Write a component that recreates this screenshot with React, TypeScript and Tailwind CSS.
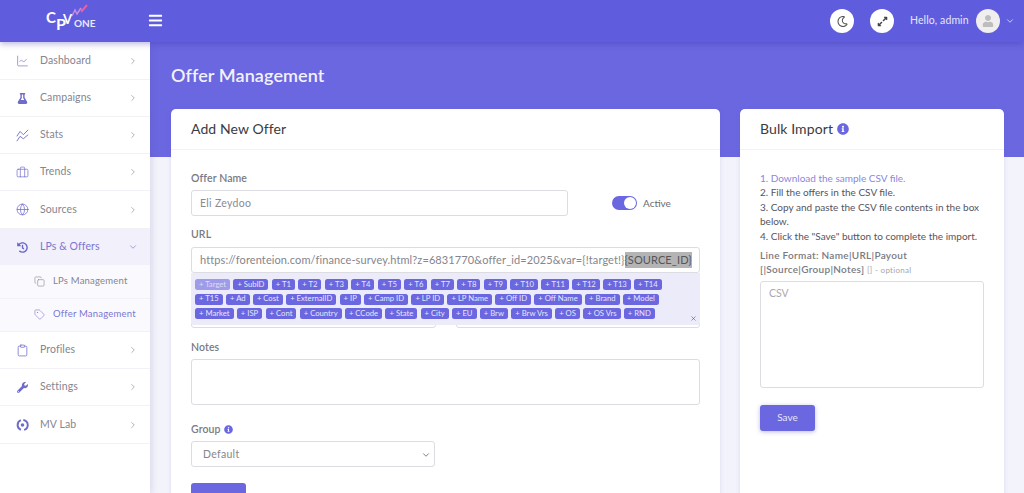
import React from 'react';
import { ChartLine, Briefcase, Globe, Copy, Tag, Clipboard, ChevronRight, ChevronDown, X } from 'lucide-react';
import { FaBars, FaFlask, FaHistory, FaWrench, FaInfoCircle, FaUser, FaRegMoon, FaExpandAlt } from 'react-icons/fa';

const StatsIcon = () => (
  <svg width="15" height="15" viewBox="0 0 16 16" fill="none" stroke="currentColor" strokeWidth="1.1">
    <path d="M1 9 L5 3 L9 7 L15 1" />
    <path d="M1 15 L5 9 L9 12 L15 7" />
  </svg>
);

const LabIcon = () => (
  <svg width="14" height="14" viewBox="0 0 16 16" fill="none" stroke="currentColor" strokeWidth="2.4">
    <path d="M6 2 A6.5 6.5 0 0 0 6 14" />
    <path d="M9 1.8 A6.5 6.5 0 0 1 14.5 8 A6.5 6.5 0 0 1 10 14" />
    <circle cx="8" cy="8" r="2.2" fill="currentColor" stroke="none" />
  </svg>
);

const items = [
  { label: 'Dashboard', icon: <ChartLine size={14} strokeWidth={1.2} />, h: 'h-[37px]' },
  { label: 'Campaigns', icon: <FaFlask size={11} />, h: 'h-[37px]' },
  { label: 'Stats', icon: <StatsIcon />, h: 'h-[37px]' },
  { label: 'Trends', icon: <Briefcase size={13} strokeWidth={1.3} />, h: 'h-[37px]' },
  { label: 'Sources', icon: <Globe size={13} strokeWidth={1.4} />, h: 'h-[38px]' },
];

const itemsAfter = [
  { label: 'Profiles', icon: <Clipboard size={13} strokeWidth={1.4} />, h: 'h-[37px]' },
  { label: 'Settings', icon: <FaWrench size={11} />, h: 'h-[37px]' },
  { label: 'MV Lab', icon: <LabIcon />, h: 'h-[38px]' },
];

const tagRows = [
  ['Target', 'SubID', 'T1', 'T2', 'T3', 'T4', 'T5', 'T6', 'T7', 'T8', 'T9', 'T10', 'T11', 'T12', 'T13', 'T14'],
  ['T15', 'Ad', 'Cost', 'ExternalID', 'IP', 'Camp ID', 'LP ID', 'LP Name', 'Off ID', 'Off Name', 'Brand', 'Model'],
  ['Market', 'ISP', 'Cont', 'Country', 'CCode', 'State', 'City', 'EU', 'Brw', 'Brw Vrs', 'OS', 'OS Vrs', 'RND'],
];

const SideItem = ({ label, icon, h }: { label: string; icon: React.ReactNode; h: string }) => (
  <div className={`${h} flex items-center border-b border-[#f1f1f6] pl-[16px] pr-[12px] text-[#85858f]`}>
    <span className="w-[13px] flex justify-center text-[#6f6bc9]">{icon}</span>
    <span className="ml-[11px] flex-1 text-[10.5px] tracking-[0.1px]">{label}</span>
    <ChevronRight size={10} strokeWidth={1.6} className="text-[#8b8b95]" />
  </div>
);

const Label = ({ children }: { children: React.ReactNode }) => (
  <div className="text-[10.5px] font-semibold text-[#7a7a82] tracking-[0.1px] leading-[14px]">{children}</div>
);

export default function App() {
  return (
    <div className="h-[493px] w-[1024px] overflow-hidden flex flex-col bg-[#f3f3fb] font-['Lato','Noto_Sans',sans-serif]">
      <header className="h-[42px] shrink-0 flex items-center bg-[#5f5cdd] shadow-[0_2px_6px_rgba(60,50,160,0.35)] z-10 text-white">
        <div className="w-[148px] flex justify-center">
          <svg width="56" height="34" viewBox="0 0 56 34">
            <path d="M26 12 L29 6 L31 10 L35 4" fill="none" stroke="#c58ae0" strokeWidth="1.6" />
            <path d="M35 5 L36 7 L41 1" fill="none" stroke="#ec5f9e" strokeWidth="2" />
            <text x="0" y="19" fontSize="15" fontWeight="700" fill="#fff" fontFamily="Lato">C</text>
            <text x="10" y="26" fontSize="16" fontWeight="700" fill="#fff" fontFamily="Lato">P</text>
            <text x="17" y="20" fontSize="13" fontWeight="700" fill="#fff" fontFamily="Lato">V</text>
            <text x="28" y="23" fontSize="10" fontWeight="700" fill="#e9e9fb" fontFamily="Lato">ONE</text>
          </svg>
        </div>
        <FaBars size={15} className="-mt-[2px]" />
        <div className="ml-auto flex items-center">
          <div className="w-[24px] h-[24px] rounded-full bg-white flex items-center justify-center text-[#555]"><FaRegMoon size={11} /></div>
          <div className="ml-[16px] w-[24px] h-[24px] rounded-full bg-white flex items-center justify-center text-[#444]"><FaExpandAlt size={11} /></div>
          <span className="ml-[16px] w-[53px] text-[10.5px] text-[#e6e6fa] tracking-[0.1px] whitespace-nowrap">Hello, admin</span>
          <div className="ml-[13px] w-[24px] h-[24px] rounded-full bg-[#f0eeee] flex items-center justify-center text-[#bdbdbd]"><FaUser size={12} /></div>
          <ChevronDown size={10} strokeWidth={2} className="ml-[5px] mr-[9px] text-[#e6e6fa]" />
        </div>
      </header>

      <div className="flex flex-1 min-h-0">
        <aside className="w-[150px] shrink-0 pt-[1px] bg-white shadow-[2px_0_6px_rgba(90,85,170,0.16)] z-[5]">
          {items.map(i => <SideItem key={i.label} {...i} />)}
          <div className="h-[36px] flex items-center pl-[16px] pr-[12px] bg-[#f1f0fb] text-[#7b76d2]">
            <span className="w-[13px] flex justify-center text-[#6a66cc]"><FaHistory size={11} /></span>
            <span className="ml-[11px] flex-1 text-[10.5px] tracking-[0.1px]">LPs &amp; Offers</span>
            <ChevronDown size={10} strokeWidth={1.6} />
          </div>
          <div className="bg-[#fafafe]">
            <div className="h-[34px] flex items-center pl-[34px] border-b border-[#f1f1f6] text-[#85858f]">
              <Copy size={11} strokeWidth={1.3} />
              <span className="ml-[8px] text-[9.5px] tracking-[0.2px]">LPs Management</span>
            </div>
            <div className="h-[33px] flex items-center pl-[34px] pb-[2px] border-b border-[#f1f1f6] text-[#7b76d2]">
              <Tag size={11} strokeWidth={1.3} />
              <span className="ml-[8px] text-[9.5px] tracking-[0.2px]">Offer Management</span>
            </div>
          </div>
          {itemsAfter.map(i => <SideItem key={i.label} {...i} />)}
        </aside>

        <main className="flex-1 min-w-0">
          <div className="h-[115px] bg-[#6a67e0] pl-[21px] pt-[22px]">
            <h1 className="text-[18px] leading-[22px] font-semibold text-[#f2f2fd] tracking-[0.1px]">Offer Management</h1>
          </div>
          <div className="-mt-[48px] flex items-start pl-[21px]">
            <section className="w-[549px] h-[500px] shrink-0 bg-white rounded-[5px] shadow-[0_1px_4px_rgba(90,85,170,0.15)]">
              <div className="h-[41px] flex items-center pl-[20px] pb-[1px] border-b border-[#f1f1f6] text-[14px] text-[#3b3b42] tracking-[0.1px]">Add New Offer</div>
              <div className="pl-[20px] pr-[20px] pt-[21px]">
                <Label>Offer Name</Label>
                <div className="mt-[5px] flex items-center">
                  <div className="w-[377px] h-[26px] flex items-center border border-[#dcdce2] rounded-[3px] pl-[8px] pt-[2px] text-[10.5px] text-[#8a8a92] tracking-[0.3px]">Eli Zeydoo</div>
                  <div className="ml-[44px] w-[25px] h-[14px] rounded-full bg-[#6a67e0] flex items-center justify-end pr-[1px]">
                    <div className="w-[12px] h-[12px] rounded-full bg-white" />
                  </div>
                  <span className="ml-[6px] text-[10px] text-[#6b6b73]">Active</span>
                </div>

                <div className="mt-[11px]"><Label>URL</Label></div>
                <div className="relative mt-[6px]">
                  <div className="h-[26px] flex items-center border border-[#dcdce2] rounded-[3px] pl-[8px] text-[11px] text-[#85858d] tracking-[0.1px] whitespace-nowrap overflow-hidden">
                    https://forenteion.com/finance-survey.html?z=6831770&amp;offer_id=2025&amp;var={'{!target!}'}<span className="bg-[#b4b4b4] text-[#55555a]">{'{SOURCE_ID}'}</span>
                  </div>
                  <div className="absolute left-0 right-0 top-[26px] h-[52px] bg-[#ecebfa] rounded-b-[2px] pl-[4px] pt-[6px] z-[2]">
                    {tagRows.map(row => (
                      <div key={row[0]} className="flex gap-[3.3px] mb-[3.5px]">
                        {row.map(t => (
                          <span key={t} className={`h-[11px] flex items-center px-[4px] rounded-[2.5px] text-[7.7px] whitespace-nowrap ${t === 'Target' ? 'bg-[#9e9ce9] text-[#dcdcf7]' : 'bg-[#6a67e0] text-[#e6e6fb]'}`}>+ {t}</span>
                        ))}
                      </div>
                    ))}
                    <X size={7} strokeWidth={2} className="absolute right-[3px] bottom-[3px] text-[#55555f]" />
                  </div>
                </div>

                <div className="mt-[29px] flex gap-[20px]">
                  <div className="flex-1 h-[26px] border border-[#dcdce2] rounded-[3px]" />
                  <div className="flex-1 h-[26px] border border-[#dcdce2] rounded-[3px]" />
                </div>

                <div className="mt-[12px]"><Label>Notes</Label></div>
                <div className="mt-[5px] h-[46px] border border-[#dcdce2] rounded-[3px]" />

                <div className="mt-[17px] flex items-center gap-[3px]">
                  <Label>Group</Label>
                  <FaInfoCircle size={9} className="text-[#6a67e0]" />
                </div>
                <div className="mt-[5px] w-[244px] h-[26px] flex items-center justify-between border border-[#dcdce2] rounded-[3px] pl-[11px] pr-[3px] pt-[1px] text-[10.5px] text-[#85858d] tracking-[0.3px]">
                  Default
                  <ChevronDown size={10} strokeWidth={1.8} className="text-[#55555f]" />
                </div>
                <div className="mt-[16px] w-[55px] h-[26px] bg-[#6a67e0] rounded-[3px]" />
              </div>
            </section>

            <section className="ml-[20px] w-[264px] h-[500px] shrink-0 bg-white rounded-[5px] shadow-[0_1px_4px_rgba(90,85,170,0.15)]">
              <div className="h-[41px] flex items-center gap-[4px] pl-[20px] pb-[1px] border-b border-[#f1f1f6] text-[14px] text-[#3b3b42] tracking-[0.1px]">
                Bulk Import <FaInfoCircle size={12} className="text-[#6a67e0]" />
              </div>
              <div className="px-[20px] pt-[21px]">
                <div className="text-[10px] leading-[14.4px] text-[#55555d]">
                  <div className="text-[#8a87dc]">1. Download the sample CSV file.</div>
                  <div>2. Fill the offers in the CSV file.</div>
                  <div>3. Copy and paste the CSV file contents in the box below.</div>
                  <div>4. Click the "Save" button to complete the import.</div>
                </div>
                <div className="mt-[5px] text-[10px] leading-[14.4px] font-semibold text-[#7a7a82] tracking-[0.3px]">
                  Line Format: Name|URL|Payout [|Source|Group|Notes] <span className="text-[8px] font-normal text-[#a5a5ad]">[] - optional</span>
                </div>
                <div className="mt-[3px] h-[107px] w-[224px] border border-[#dcdce2] rounded-[3px] pl-[8px] pt-[4px] text-[10.5px] text-[#a9a9b0]">CSV</div>
                <div className="mt-[17px] w-[55px] h-[26px] bg-[#6a67e0] rounded-[3px] flex items-center justify-center text-[10px] text-[#e6e6fb] shadow-[0_1px_4px_rgba(90,85,170,0.4)]">Save</div>
              </div>
            </section>
          </div>
        </main>
      </div>
    </div>
  );
}
